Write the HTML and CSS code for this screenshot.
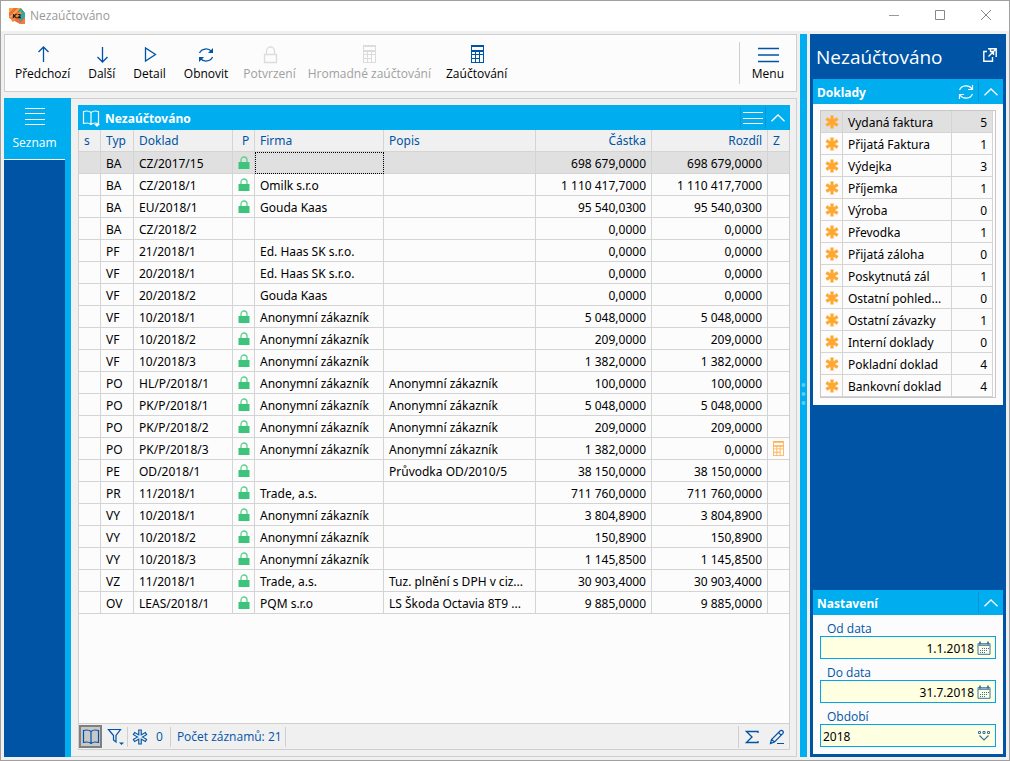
FILE: index.html
```html
<!DOCTYPE html>
<html lang="cs">
<head>
<meta charset="utf-8">
<title>Nezaúčtováno</title>
<link rel="stylesheet" href="styles.css">
</head>
<body>
<svg class="sprite" aria-hidden="true">
  <symbol id="lock" viewBox="0 0 12 14"><path d="M3 6V4a3 3 0 0 1 6 0v2" fill="none" stroke="#5fd08f" stroke-width="1.3"/><path d="M.5 6h11v7H.5z" fill="#3cc47c"/></symbol>
  <symbol id="calc" viewBox="0 0 13 18"><path d="M0 0h13v18H0z" fill="currentColor"/><path d="M1 2h11v3H1zM1 7h3v2H1zM5 7h3v2H5zM9 7h3v2H9zM1 10h3v3H1zM5 10h3v3H5zM1 14h3v3H1zM5 14h3v3H5zM9 10h3v7H9z" fill="#fcfcfc"/></symbol>
  <symbol id="star" viewBox="0 0 14 14"><path d="M7 .5v13M1.300 3.700l11.400 6.600M1.300 10.300l11.400-6.600" stroke="#ffa833" stroke-width="3.200" fill="none"/></symbol>
  <symbol id="refresh" viewBox="0 0 16 16"><path d="M1.500 6A7 6.500 0 0 1 13.500 4.500M14.500 10A7 6.500 0 0 1 2.500 11.500" fill="none" stroke="currentColor" stroke-width="1.300"/><path d="M15 1v5h-5zM1 15v-5h5z" fill="currentColor"/></symbol>
  <symbol id="refresh-thin" viewBox="0 0 16 16"><path d="M1.500 6A7 6.500 0 0 1 14 5M14.500 10A7 6.500 0 0 1 2 11M14.500 1v4.500H10M1.500 15v-4.500H6" fill="none" stroke="currentColor" stroke-width="1.200"/></symbol>
  <symbol id="chevron" viewBox="0 0 14 8"><path d="M.5 7.300L7 1l6.500 6.300" fill="none" stroke="currentColor" stroke-width="1.300"/></symbol>
  <symbol id="book" viewBox="0 0 18 16"><path d="M9 2.500C7 .8 4 .8 1.500 1.500v12C4 12.800 7 12.800 9 14.500c2-1.700 5-1.700 7.500-1v-12C14 .8 11 .8 9 2.500zv12" fill="none" stroke="currentColor" stroke-width="1.200"/></symbol>
  <symbol id="calendar" viewBox="0 0 14 14"><path d="M1 2.500h12v10.800H1zM1 4.500h12" fill="none" stroke="#3a72a5"/><path d="M1 2.500h12v2H1z" fill="#8fb0c8"/><path d="M3 .5v3M11 .5v3" stroke="#2a6498" stroke-width="1.500"/><path d="M5 7.500h7M3 9.500h8M3 11.500h6" stroke="#3a72a5" stroke-dasharray="1 1"/></symbol>
</svg>

<div class="window">
  <header class="titlebar">
    <svg class="logo" width="16" height="16" viewBox="0 0 16 16" aria-hidden="true">
      <path d="M0 0h11l5 5v11h-5L0 10z" fill="#ef6b3a"/><path d="M0 0h5L0 5z" fill="#f4a43a"/><path d="M0 9l9-9h3L2 10z" fill="#f5a544"/><path d="M9 3l3-3 4 5v4l-5 5z" fill="#35a69a"/><path d="M2 12l9-9 2 2-9 9z" fill="#f08a3c"/><path d="M11 16l5-6v6z" fill="#ee7b49"/><path d="M4.500 6v4M7.500 6L5 8l2.500 2M8.700 6.500H11V8L9 9.700h3" stroke="#222" stroke-width="1.200" fill="none"/>
    </svg>
    <h1 class="titlebar-text">Nezaúčtováno</h1>
    <button class="win-btn" aria-label="Minimalizovat"><svg width="12" height="12"><path d="M1 5.500h10" stroke="#999"/></svg></button>
    <button class="win-btn" aria-label="Maximalizovat"><svg width="12" height="12"><path d="M1.500 .5h9v9h-9z" stroke="#888" fill="none"/></svg></button>
    <button class="win-btn" aria-label="Zavřít"><svg width="12" height="12"><path d="M1 0l10 10M11 0L1 10" stroke="#888"/></svg></button>
  </header>

  <div class="workspace">
    <div class="left">
      <nav class="toolbar">
        <button class="tool"><svg width="20" height="20"><path d="M10.500 18V3M5.500 8l5-5 5 5" /></svg>Předchozí</button>
        <button class="tool"><svg width="20" height="20"><path d="M10.500 3v15M5.500 13l5 5 5-5"/></svg>Další</button>
        <button class="tool"><svg width="20" height="20"><path d="M5.500 4v13l10-6.500z"/></svg>Detail</button>
        <button class="tool"><svg width="20" height="20"><use href="#refresh" x="2" y="3" width="16" height="16"/></svg>Obnovit</button>
        <button class="tool" disabled><svg width="20" height="20"><path d="M4.500 10.500h12v8h-12zM6.500 10.500V7a4 4 0 0 1 8 0v3.500"/></svg>Potvrzení</button>
        <button class="tool" disabled><svg width="20" height="20"><use href="#calc" x="4" y="1" width="13" height="18"/></svg>Hromadné zaúčtování</button>
        <button class="tool"><svg width="20" height="20"><use href="#calc" x="4" y="1" width="13" height="18"/></svg>Zaúčtování</button>
        <button class="tool tool-menu"><svg width="22" height="20"><path d="M1 4.500h21M1 11h21M1 17.500h21"/></svg>Menu</button>
      </nav>

      <div class="content">
        <nav class="sidebar">
          <button class="side-item"><svg width="20" height="18"><path d="M0 .5h20M0 5.500h20M0 11.500h20M0 16.500h20" stroke="#fff"/></svg>Seznam</button>
        </nav>
        <main class="main">
          <section class="grid-panel">
            <div class="bar">
              <button class="bar-book" aria-label="Kniha"><svg width="19" height="18"><use href="#book" width="18" height="16"/><path d="M12 14h6l-3 3z" fill="#fff"/></svg></button>
              <h2 class="bar-title">Nezaúčtováno</h2>
              <button class="bar-btn" aria-label="Nabídka"><svg width="20" height="14"><path d="M0 1.500h20M0 7.500h20M0 12.500h20" stroke="#fff"/></svg></button>
              <button class="bar-btn" aria-label="Sbalit"><svg width="14" height="8"><use href="#chevron"/></svg></button>
            </div>
            <div class="grid-scroll">
              <table class="grid">
                <colgroup><col class="c-s"><col class="c-typ"><col class="c-doklad"><col class="c-p"><col class="c-firma"><col class="c-popis"><col class="c-num"><col class="c-num"><col class="c-z"></colgroup>
                <thead><tr><th>s</th><th>Typ</th><th>Doklad</th><th class="p">P</th><th>Firma</th><th>Popis</th><th class="num">Částka</th><th class="num">Rozdíl</th><th>Z</th></tr></thead>
                <tbody>
                  <tr class="selected"><td></td><td>BA</td><td>CZ/2017/15</td><td class="icon"><svg width="12" height="14"><use href="#lock"/></svg></td><td class="focused"></td><td></td><td class="num">698 679,0000</td><td class="num">698 679,0000</td><td></td></tr>
                  <tr><td></td><td>BA</td><td>CZ/2018/1</td><td class="icon"><svg width="12" height="14"><use href="#lock"/></svg></td><td>Omilk s.r.o</td><td></td><td class="num">1 110 417,7000</td><td class="num">1 110 417,7000</td><td></td></tr>
                  <tr><td></td><td>BA</td><td>EU/2018/1</td><td class="icon"><svg width="12" height="14"><use href="#lock"/></svg></td><td>Gouda Kaas</td><td></td><td class="num">95 540,0300</td><td class="num">95 540,0300</td><td></td></tr>
                  <tr><td></td><td>BA</td><td>CZ/2018/2</td><td></td><td></td><td></td><td class="num">0,0000</td><td class="num">0,0000</td><td></td></tr>
                  <tr><td></td><td>PF</td><td>21/2018/1</td><td></td><td>Ed. Haas SK s.r.o.</td><td></td><td class="num">0,0000</td><td class="num">0,0000</td><td></td></tr>
                  <tr><td></td><td>VF</td><td>20/2018/1</td><td></td><td>Ed. Haas SK s.r.o.</td><td></td><td class="num">0,0000</td><td class="num">0,0000</td><td></td></tr>
                  <tr><td></td><td>VF</td><td>20/2018/2</td><td></td><td>Gouda Kaas</td><td></td><td class="num">0,0000</td><td class="num">0,0000</td><td></td></tr>
                  <tr><td></td><td>VF</td><td>10/2018/1</td><td class="icon"><svg width="12" height="14"><use href="#lock"/></svg></td><td>Anonymní zákazník</td><td></td><td class="num">5 048,0000</td><td class="num">5 048,0000</td><td></td></tr>
                  <tr><td></td><td>VF</td><td>10/2018/2</td><td class="icon"><svg width="12" height="14"><use href="#lock"/></svg></td><td>Anonymní zákazník</td><td></td><td class="num">209,0000</td><td class="num">209,0000</td><td></td></tr>
                  <tr><td></td><td>VF</td><td>10/2018/3</td><td class="icon"><svg width="12" height="14"><use href="#lock"/></svg></td><td>Anonymní zákazník</td><td></td><td class="num">1 382,0000</td><td class="num">1 382,0000</td><td></td></tr>
                  <tr><td></td><td>PO</td><td>HL/P/2018/1</td><td class="icon"><svg width="12" height="14"><use href="#lock"/></svg></td><td>Anonymní zákazník</td><td>Anonymní zákazník</td><td class="num">100,0000</td><td class="num">100,0000</td><td></td></tr>
                  <tr><td></td><td>PO</td><td>PK/P/2018/1</td><td class="icon"><svg width="12" height="14"><use href="#lock"/></svg></td><td>Anonymní zákazník</td><td>Anonymní zákazník</td><td class="num">5 048,0000</td><td class="num">5 048,0000</td><td></td></tr>
                  <tr><td></td><td>PO</td><td>PK/P/2018/2</td><td class="icon"><svg width="12" height="14"><use href="#lock"/></svg></td><td>Anonymní zákazník</td><td>Anonymní zákazník</td><td class="num">209,0000</td><td class="num">209,0000</td><td></td></tr>
                  <tr><td></td><td>PO</td><td>PK/P/2018/3</td><td class="icon"><svg width="12" height="14"><use href="#lock"/></svg></td><td>Anonymní zákazník</td><td>Anonymní zákazník</td><td class="num">1 382,0000</td><td class="num">0,0000</td><td class="icon calc"><svg width="11" height="15"><use href="#calc"/></svg></td></tr>
                  <tr><td></td><td>PE</td><td>OD/2018/1</td><td class="icon"><svg width="12" height="14"><use href="#lock"/></svg></td><td></td><td>Průvodka OD/2010/5</td><td class="num">38 150,0000</td><td class="num">38 150,0000</td><td></td></tr>
                  <tr><td></td><td>PR</td><td>11/2018/1</td><td class="icon"><svg width="12" height="14"><use href="#lock"/></svg></td><td>Trade, a.s.</td><td></td><td class="num">711 760,0000</td><td class="num">711 760,0000</td><td></td></tr>
                  <tr><td></td><td>VY</td><td>10/2018/1</td><td class="icon"><svg width="12" height="14"><use href="#lock"/></svg></td><td>Anonymní zákazník</td><td></td><td class="num">3 804,8900</td><td class="num">3 804,8900</td><td></td></tr>
                  <tr><td></td><td>VY</td><td>10/2018/2</td><td class="icon"><svg width="12" height="14"><use href="#lock"/></svg></td><td>Anonymní zákazník</td><td></td><td class="num">150,8900</td><td class="num">150,8900</td><td></td></tr>
                  <tr><td></td><td>VY</td><td>10/2018/3</td><td class="icon"><svg width="12" height="14"><use href="#lock"/></svg></td><td>Anonymní zákazník</td><td></td><td class="num">1 145,8500</td><td class="num">1 145,8500</td><td></td></tr>
                  <tr><td></td><td>VZ</td><td>11/2018/1</td><td class="icon"><svg width="12" height="14"><use href="#lock"/></svg></td><td>Trade, a.s.</td><td>Tuz. plnění s DPH v ciz...</td><td class="num">30 903,4000</td><td class="num">30 903,4000</td><td></td></tr>
                  <tr><td></td><td>OV</td><td>LEAS/2018/1</td><td class="icon"><svg width="12" height="14"><use href="#lock"/></svg></td><td>PQM s.r.o</td><td>LS Škoda Octavia 8T9 ...</td><td class="num">9 885,0000</td><td class="num">9 885,0000</td><td></td></tr>
                </tbody>
              </table>
            </div>
            <footer class="status">
              <button class="status-btn pressed" aria-label="Kniha"><svg width="18" height="16"><use href="#book"/></svg></button>
              <button class="status-btn filter" aria-label="Filtr"><svg width="18" height="18"><path d="M1.500 1.500h12L9 7.500v6.500l-2.500-2V7.500z" fill="none" stroke="currentColor" stroke-width="1.200"/><path d="M12 14.500h5L14.500 17z" fill="currentColor"/></svg></button>
              <button class="status-btn marked"><svg width="16" height="16" viewBox="0 0 16 16"><path d="M8 .5v15M1.500 4.300l13 7.400M1.500 11.700l13-7.400" stroke="currentColor" stroke-width="3.600"/><path d="M8 1.500v13M2.500 4.900l11 6.200M2.500 11.100l11-6.200" stroke="#f0f0f0" stroke-width="1.300"/></svg>0</button>
              <span class="status-count">Počet záznamů: 21</span>
              <span class="status-tools">
                <button class="status-btn" aria-label="Součet"><svg width="14" height="14"><path d="M13 3V1.500H1.500L7 7l-5.500 5.500H13V11" fill="none" stroke="currentColor" stroke-width="1.300"/></svg></button>
                <button class="status-btn" aria-label="Upravit"><svg width="16" height="16"><path d="M1.500 14.500l1-4L11 2q1.500-1.200 2.700 0t0 2.700L5.500 13zM2.500 10.500l3 2.500M9.500 3.500l2.800 2.800M8 14.500h7" fill="none" stroke="currentColor" stroke-width="1.200"/></svg></button>
              </span>
            </footer>
          </section>
        </main>
      </div>
    </div>

    <div class="splitter"><svg width="7" height="24"><g fill="#5ecbf5"><circle cx="3.500" cy="3" r="2"/><circle cx="3.500" cy="12" r="2"/><circle cx="3.500" cy="21" r="2"/></g></svg></div>

    <aside class="right">
      <div class="right-head">
        <h2 class="right-title">Nezaúčtováno</h2>
        <button class="popout" aria-label="Otevřít v okně"><svg width="14" height="18"><path d="M5 .8h8.200V9M13 1L5.500 8.500M7.500 3.500V1M4 3.500H.8v9.700h8.700V9M7 3.500h3.500V7" fill="none" stroke="#fff" stroke-width="1.400"/></svg></button>
      </div>
      <section class="card">
        <div class="bar">
          <h3 class="bar-title">Doklady</h3>
          <button class="bar-refresh" aria-label="Obnovit"><svg width="16" height="16"><use href="#refresh-thin"/></svg></button>
          <button class="bar-btn" aria-label="Sbalit"><svg width="14" height="8"><use href="#chevron"/></svg></button>
        </div>
        <div class="card-body">
          <div class="docs-frame">
            <table class="docs">
              <colgroup><col class="d-icon"><col><col class="d-count"></colgroup>
              <tbody>
                <tr class="selected"><td class="icon"><svg width="14" height="14"><use href="#star"/></svg></td><td>Vydaná faktura</td><td class="num">5</td></tr>
                <tr><td class="icon"><svg width="14" height="14"><use href="#star"/></svg></td><td>Přijatá Faktura</td><td class="num">1</td></tr>
                <tr><td class="icon"><svg width="14" height="14"><use href="#star"/></svg></td><td>Výdejka</td><td class="num">3</td></tr>
                <tr><td class="icon"><svg width="14" height="14"><use href="#star"/></svg></td><td>Příjemka</td><td class="num">1</td></tr>
                <tr><td class="icon"><svg width="14" height="14"><use href="#star"/></svg></td><td>Výroba</td><td class="num">0</td></tr>
                <tr><td class="icon"><svg width="14" height="14"><use href="#star"/></svg></td><td>Převodka</td><td class="num">1</td></tr>
                <tr><td class="icon"><svg width="14" height="14"><use href="#star"/></svg></td><td>Přijatá záloha</td><td class="num">0</td></tr>
                <tr><td class="icon"><svg width="14" height="14"><use href="#star"/></svg></td><td>Poskytnutá zál</td><td class="num">1</td></tr>
                <tr><td class="icon"><svg width="14" height="14"><use href="#star"/></svg></td><td>Ostatní pohled...</td><td class="num">0</td></tr>
                <tr><td class="icon"><svg width="14" height="14"><use href="#star"/></svg></td><td>Ostatní závazky</td><td class="num">1</td></tr>
                <tr><td class="icon"><svg width="14" height="14"><use href="#star"/></svg></td><td>Interní doklady</td><td class="num">0</td></tr>
                <tr><td class="icon"><svg width="14" height="14"><use href="#star"/></svg></td><td>Pokladní doklad</td><td class="num">4</td></tr>
                <tr><td class="icon"><svg width="14" height="14"><use href="#star"/></svg></td><td>Bankovní doklad</td><td class="num">4</td></tr>
              </tbody>
            </table>
          </div>
        </div>
      </section>
      <section class="card settings">
        <div class="bar">
          <h3 class="bar-title">Nastavení</h3>
          <button class="bar-btn" aria-label="Sbalit"><svg width="14" height="8"><use href="#chevron"/></svg></button>
        </div>
        <form class="card-body form">
          <label class="label" for="od">Od data</label>
          <div class="field"><input class="input" id="od" type="text" value="1.1.2018"><button class="field-btn" type="button" aria-label="Kalendář"><svg width="14" height="14"><use href="#calendar"/></svg></button></div>
          <label class="label" for="do">Do data</label>
          <div class="field"><input class="input" id="do" type="text" value="31.7.2018"><button class="field-btn" type="button" aria-label="Kalendář"><svg width="14" height="14"><use href="#calendar"/></svg></button></div>
          <label class="label" for="obdobi">Období</label>
          <div class="field"><select class="select" id="obdobi"><option>2018</option></select><svg class="select-icon" width="12" height="12"><path d="M.5 1.500h2v2h-2zM5 1.500h2v2H5zM9.500 1.500h2v2h-2z" fill="none" stroke="#3a72a5"/><path d="M1.500 5.500L6 10l4.500-4.500" fill="none" stroke="#3a72a5" stroke-width="1.200"/></svg></div>
        </form>
      </section>
    </aside>
  </div>
</div>
</body>
</html>
```
FILE: styles.css
```css
* { box-sizing: border-box; }

:root {
  --cyan: #00adef;
  --blue: #0054a6;
  --line: #cfcfcf;
  --face: #f0f0f0;
  --paper: #fcfcfc;
  --ui-font: "Open Sans", "Noto Sans", sans-serif;
}

body {
  margin: 0;
  font: 12px/16px "Noto Sans", "Open Sans", sans-serif;
  color: #000;
}

button {
  border: 0;
  margin: 0;
  padding: 0;
  background: none;
  font: inherit;
  color: inherit;
}

h1, h2, h3 { margin: 0; font: inherit; }
svg { display: block; flex: none; }
.sprite { position: absolute; width: 0; height: 0; }

.window {
  display: flex;
  flex-direction: column;
  height: 100vh;
  min-height: 640px;
  border: 1px solid #a0a0a0;
  background: var(--face);
}

.titlebar {
  display: flex;
  align-items: center;
  height: 30px;
  padding-left: 8px;
  background: #fff;
  color: #999;
  font-family: var(--ui-font);
}
.titlebar-text { flex: 1; padding-left: 5px; }
.win-btn { display: flex; justify-content: center; width: 46px; }

.workspace {
  flex: 1;
  display: flex;
  gap: 3px;
  min-height: 0;
  padding: 3px;
}
.left {
  flex: 1;
  min-width: 0;
  display: flex;
  flex-direction: column;
  gap: 6px;
}

.toolbar {
  display: flex;
  align-items: center;
  height: 58px;
  padding: 0 3px 0 1px;
  border: 1px solid var(--line);
  background: var(--paper);
  font-family: var(--ui-font);
}
.tool {
  display: flex;
  flex-direction: column;
  align-items: center;
  justify-content: center;
  gap: 2px;
  height: 42px;
  padding: 0 9px;
  white-space: nowrap;
}
.tool svg { fill: none; stroke: var(--blue); stroke-width: 1.3; color: var(--blue); }
.tool use { stroke: none; }
.tool:disabled { padding: 0 6px; color: #a0a0a0; }
.tool:disabled svg { stroke: #dcdcdc; color: #dcdcdc; }
.tool-menu { margin-left: auto; padding: 0 9px 0 12px; border-left: 1px solid var(--line); }

.content { flex: 1; display: flex; min-height: 0; }
.sidebar {
  width: 67px;
  border-right: 6px solid var(--cyan);
  background: var(--blue);
  font-family: var(--ui-font);
}
.side-item {
  display: flex;
  flex-direction: column;
  align-items: center;
  gap: 9px;
  width: 100%;
  height: 62px;
  padding-top: 10px;
  border-bottom: 1px solid #fff;
  background: var(--cyan);
  color: #fff;
}
.main {
  flex: 1;
  display: flex;
  min-width: 0;
  padding: 6px 6px 6px 7px;
  border: solid var(--line);
  border-width: 1px 1px 1px 0;
}
.grid-panel {
  flex: 1;
  display: flex;
  flex-direction: column;
  min-width: 0;
}

.bar {
  display: flex;
  align-items: center;
  height: 25px;
  background: var(--cyan);
  color: #fff;
}
.bar-title { flex: 1; padding: 2px 0 0 4px; font-weight: 700; }
.bar-book { padding: 2px 0 0 4px; }
.bar-btn {
  display: flex;
  align-items: center;
  justify-content: center;
  width: 25px;
  height: 21px;
  border-left: 1px solid #0a94d3;
}
.bar-refresh { padding-right: 4px; }

.grid-scroll {
  flex: 1;
  min-height: 0;
  overflow: hidden;
  border-left: 1px solid var(--line);
  border-right: 1px solid var(--line);
  background: var(--paper);
}
.grid, .docs {
  width: 100%;
  table-layout: fixed;
  border-collapse: separate;
  border-spacing: 0;
}
th, td {
  height: 22px;
  padding: 0 5px;
  overflow: hidden;
  border-right: 1px solid #d4d4d4;
  border-bottom: 1px solid #d4d4d4;
  font-weight: 400;
  text-align: left;
  white-space: nowrap;
}
td { padding-top: 2px; }
.grid th:last-child, .grid td:last-child { border-right: 0; }
th { background: var(--face); color: var(--blue); }
.grid .num { text-align: right; }
.grid .p { padding: 0 0 0 9px; }
td.icon { padding: 0; }
td.icon svg { margin: 0 auto; }
td.calc { color: #ffb04d; }
tr.selected td { background: #e0e0e0; }
td.focused { outline: 1px dotted #000; outline-offset: -1px; }
.c-s { width: 22px; }
.c-typ { width: 33px; }
.c-doklad { width: 99px; }
.c-p { width: 22px; }
.c-firma { width: 129px; }
.c-num { width: 116px; }
.c-z { width: 21px; }

.status {
  display: flex;
  align-items: center;
  height: 27px;
  border: 1px solid var(--line);
  color: var(--blue);
  font-family: var(--ui-font);
}
.status-btn { display: flex; align-items: center; }
.pressed {
  width: 23px;
  height: 23px;
  padding: 0 1px;
  border: 2px solid #808080;
  background: #c8c8c8;
}
.filter {
  height: 20px;
  padding: 0 2px 0 5px;
  border-right: 1px solid var(--line);
}
.marked {
  gap: 8px;
  height: 20px;
  padding: 0 7px 0 4px;
  border-right: 1px solid var(--line);
}
.status-count { padding: 2px 3px 2px 6px; border-right: 1px solid var(--line); }
.status-tools {
  display: flex;
  gap: 10px;
  margin-left: auto;
  padding: 3px 4px 3px 6px;
  border-left: 1px solid var(--line);
}

.splitter {
  display: flex;
  align-items: center;
  width: 7px;
  padding-bottom: 4px;
  background: var(--cyan);
}

.right {
  display: flex;
  flex-direction: column;
  width: 196px;
  padding: 0 3px 3px;
  background: var(--blue);
  color: #fff;
}
.right-head {
  display: flex;
  align-items: center;
  height: 45px;
  padding: 0 6px 0 3px;
}
.right-title {
  flex: 1;
  font-family: var(--ui-font);
  font-size: 19px;
  line-height: 26px;
}
.card-body {
  padding: 6px 7px 7px;
  background: var(--paper);
  color: #000;
}
.docs-frame {
  padding-right: 2px;
  border: 1px solid #c8c8c8;
}
.d-icon { width: 22px; }
.d-count { width: 41px; }
.docs .num { text-align: right; }

.settings { margin-top: auto; }
.form { display: flex; flex-direction: column; padding-top: 0; }
.label {
  padding: 6px 7px 0;
  font-family: var(--ui-font);
  line-height: 15px;
  color: var(--blue);
}
.field {
  display: flex;
  align-items: center;
  height: 23px;
  border: 1px solid #00a5f0;
  background: #ffffe1;
}
.input, .select {
  flex: 1;
  min-width: 0;
  height: 100%;
  padding: 2px 3px 0 2px;
  border: 0;
  background: none;
  font: inherit;
  color: #000;
  appearance: none;
}
.input { text-align: right; }
.field-btn { padding-right: 4px; }
.select-icon { margin-right: 5px; }
```
